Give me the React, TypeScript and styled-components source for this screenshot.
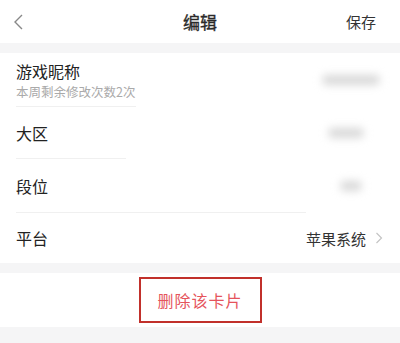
import styled, { createGlobalStyle } from "styled-components";

const GlobalStyle = createGlobalStyle`
  html, body {
    margin: 0;
    padding: 0;
    background: #f5f5f6;
    font-family: "Noto Sans CJK SC", "Noto Sans", sans-serif;
  }
`;

const Page = styled.div`
  width: 400px;
  height: 343px;
  overflow: hidden;
  background: #f5f5f6;
  display: flex;
  flex-direction: column;
`;

const Header = styled.div`
  height: 43px;
  background: #fff;
  display: grid;
  grid-template-columns: 60px 1fr 60px;
  align-items: center;
  padding: 0 24px 0 12px;
  box-sizing: border-box;
  margin-bottom: 10px;
`;

const Back = styled.div`
  display: flex;
  align-items: center;
  color: #888;
`;

const Title = styled.div`
  text-align: center;
  font-size: 17px;
  font-weight: 400;
  color: #2a2a2a;
  -webkit-text-stroke: 0.35px #2a2a2a;
  padding-left: 12px;
`;

const Save = styled.div`
  text-align: right;
  font-size: 15px;
  color: #333;
`;

const Section = styled.div`
  background: #fff;
  padding-left: 16px;
  margin-bottom: 10px;
`;

const Row = styled.div<{ $h: number }>`
  height: ${(p) => p.$h}px;
  display: flex;
  align-items: center;
  justify-content: space-between;
  padding-right: 20px;
`;

const Divider = styled.div<{ $w: number }>`
  width: ${(p) => p.$w}px;
  height: 1px;
  background: #f0f0f0;
`;

const LabelBox = styled.div`
  display: flex;
  flex-direction: column;
`;

const Label = styled.div`
  font-size: 16px;
  color: #222;
  line-height: 22px;
`;

const Sub = styled.div`
  font-size: 12.5px;
  color: #aaa;
  line-height: 15px;
  margin-top: 2px;
`;

const Blur = styled.div<{ $w: number; $mr: number }>`
  width: ${(p) => p.$w}px;
  height: 10px;
  margin-right: ${(p) => p.$mr}px;
  border-radius: 6px;
  background: #d8d8d8;
  filter: blur(4px);
`;

const Value = styled.div`
  display: flex;
  align-items: center;
  gap: 9px;
  font-size: 15px;
  color: #333;
  margin-right: -3px;
`;

const DeleteArea = styled.div`
  background: #fff;
  height: 54px;
  display: flex;
  align-items: center;
  justify-content: center;
`;

const DeleteBtn = styled.div`
  width: 123px;
  height: 46px;
  box-sizing: border-box;
  border: 2px solid #c1302b;
  display: flex;
  align-items: center;
  justify-content: center;
  font-size: 16px;
  color: #e5545c;
  letter-spacing: 1px;
`;

export default function App() {
  return (
    <Page>
      <GlobalStyle />
      <Header>
        <Back>
          <svg width="14" height="18" viewBox="0 0 14 18">
            <path d="M10 2 L3 9 L10 16" fill="none" stroke="#888" strokeWidth="1.4" />
          </svg>
        </Back>
        <Title>编辑</Title>
        <Save>保存</Save>
      </Header>
      <Section>
        <Row $h={53}>
          <LabelBox>
            <Label>游戏昵称</Label>
            <Sub>本周剩余修改次数2次</Sub>
          </LabelBox>
          <Blur $w={58} $mr={0} />
        </Row>
        <Divider $w={120} />
        <Row $h={51}>
          <Label>大区</Label>
          <Blur $w={36} $mr={16} />
        </Row>
        <Divider $w={110} />
        <Row $h={53}>
          <Label>段位</Label>
          <Blur $w={22} $mr={18} />
        </Row>
        <Divider $w={290} />
        <Row $h={50}>
          <Label>平台</Label>
          <Value>
            苹果系统
            <svg width="8" height="14" viewBox="0 0 8 14">
              <path d="M1.5 2 L6.5 7 L1.5 12" fill="none" stroke="#c4c4c4" strokeWidth="1.2" />
            </svg>
          </Value>
        </Row>
      </Section>
      <DeleteArea>
        <DeleteBtn>删除该卡片</DeleteBtn>
      </DeleteArea>
    </Page>
  );
}
